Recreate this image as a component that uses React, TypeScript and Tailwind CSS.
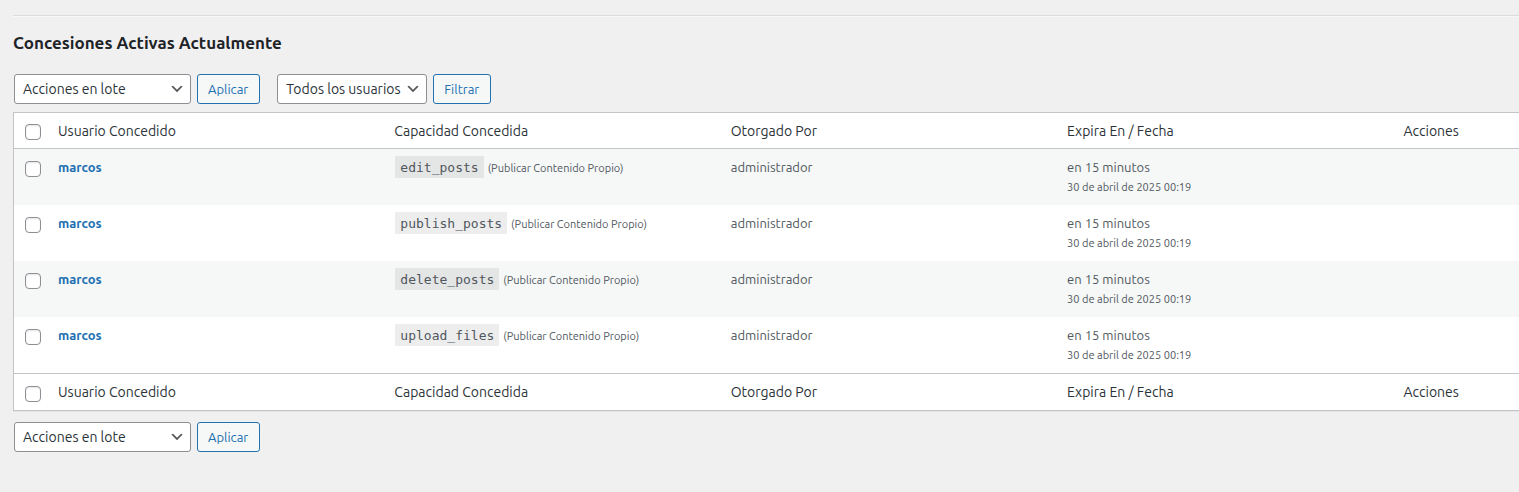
import { ReactNode, useState } from "react";

const columns = [
  "Usuario Concedido",
  "Capacidad Concedida",
  "Otorgado Por",
  "Expira En / Fecha",
  "Acciones",
];

const grants = [
  { id: 1, user: "marcos", capability: "edit_posts" },
  { id: 2, user: "marcos", capability: "publish_posts" },
  { id: 3, user: "marcos", capability: "delete_posts" },
  { id: 4, user: "marcos", capability: "upload_files" },
].map((grant) => ({
  ...grant,
  description: "(Publicar Contenido Propio)",
  grantedBy: "administrador",
  expiresIn: "en 15 minutos",
  expiresAt: "30 de abril de 2025 00:19",
}));

function Dropdown({ label, options, width }: { label: string; options: string[]; width: string }) {
  return (
    <div className={`relative ${width}`}>
      <select
        aria-label={label}
        className="h-[30px] w-full appearance-none rounded-[3px] border border-[#8c8f94] bg-white pr-6 pl-2 text-[14px] leading-7 text-[#2c3338]"
      >
        {options.map((option) => (
          <option key={option}>{option}</option>
        ))}
      </select>
      <svg
        viewBox="0 0 20 20"
        className="pointer-events-none absolute top-[7px] right-[6px] size-4"
        fill="#555"
        aria-hidden="true"
      >
        <path d="M5 6l5 5 5-5 2 1-7 7-7-7 2-1z" />
      </svg>
    </div>
  );
}

function Button({ children }: { children: ReactNode }) {
  return (
    <button
      type="button"
      className="h-[30px] rounded-[3px] border border-[#2271b1] bg-[#f6f7f7] pr-[11px] pl-[10px] text-[13px] leading-7 text-[#2271b1]"
    >
      {children}
    </button>
  );
}

function Tick({ label, checked, onChange }: { label: string; checked: boolean; onChange: () => void }) {
  return (
    <input
      type="checkbox"
      aria-label={label}
      checked={checked}
      onChange={onChange}
      className="block size-4 appearance-none rounded-[4px] border border-[#8c8f94] bg-white shadow-[inset_0_1px_2px_rgba(0,0,0,0.1)] checked:bg-[#2271b1]"
    />
  );
}

function BulkActions() {
  return (
    <div className="flex gap-[6px]">
      <Dropdown label="Acciones en lote" options={["Acciones en lote", "Revocar"]} width="w-[177px]" />
      <Button>Aplicar</Button>
    </div>
  );
}

export default function App() {
  const [selected, setSelected] = useState<number[]>([]);
  const allSelected = selected.length === grants.length;
  const toggleAll = () => setSelected(allSelected ? [] : grants.map((grant) => grant.id));
  const toggle = (id: number) =>
    setSelected((ids) => (ids.includes(id) ? ids.filter((other) => other !== id) : [...ids, id]));

  return (
    <main className="min-h-screen overflow-hidden bg-[#f0f0f1] pt-[15px] pl-[13px] font-['Ubuntu','Noto_Sans',sans-serif] text-[13px] leading-5 text-[#50575e]">
      <hr className="h-[2px] border-t border-b border-t-[#dcdcde] border-b-[#f6f7f7]" />
      <h2 className="mt-4 text-[17px] leading-5 font-bold text-[#1d2327]">
        Concesiones Activas Actualmente
      </h2>

      <div className="mt-[21px] ml-px flex gap-[17px]">
        <BulkActions />
        <div className="flex gap-[6px]">
          <Dropdown
            label="Filtrar por usuario"
            options={["Todos los usuarios", "marcos"]}
            width="w-[150px]"
          />
          <Button>Filtrar</Button>
        </div>
      </div>

      <div className="mt-2 border-y border-l border-[#c3c4c7] bg-white shadow-[0_1px_1px_rgba(0,0,0,0.04)]">
        <table className="w-full table-fixed border-separate border-spacing-0 text-left">
          <colgroup>
            <col className="w-[34px]" />
            <col className="w-[22.35%]" />
            <col className="w-[22.35%]" />
            <col className="w-[22.35%]" />
            <col className="w-[22.35%]" />
            <col />
          </colgroup>
          <thead>
            <tr className="h-9 text-[14px] text-[#2c3338]">
              <td className="border-b border-[#c3c4c7] pt-[11px] pl-[11px] align-top">
                <Tick label="Seleccionar todos" checked={allSelected} onChange={toggleAll} />
              </td>
              {columns.map((column) => (
                <th key={column} scope="col" className="border-b border-[#c3c4c7] px-[10px] font-normal">
                  {column}
                </th>
              ))}
            </tr>
          </thead>
          <tbody>
            {grants.map((grant) => (
              <tr key={grant.id} className="h-14 align-top odd:bg-[#f6f7f7]">
                <td className="pt-3 pl-[11px]">
                  <Tick
                    label={`Seleccionar ${grant.capability}`}
                    checked={selected.includes(grant.id)}
                    onChange={() => toggle(grant.id)}
                  />
                </td>
                <td className="px-[10px] py-2">
                  <a href="#usuario" className="font-bold text-[#2271b1]">
                    {grant.user}
                  </a>
                </td>
                <td className="px-[10px] py-2">
                  <code className="mx-px bg-black/7 px-[5px] pt-1 pb-[3px] font-['DejaVu_Sans_Mono',monospace] text-[13px]">
                    {grant.capability}
                  </code>{" "}
                  <small className="text-[11px]">{grant.description}</small>
                </td>
                <td className="px-[10px] py-2">{grant.grantedBy}</td>
                <td className="px-[10px] py-2">
                  {grant.expiresIn}
                  <small className="block text-[11px]">{grant.expiresAt}</small>
                </td>
                <td className="px-[10px] py-2" />
              </tr>
            ))}
          </tbody>
          <tfoot>
            <tr className="h-[37px] text-[14px] text-[#2c3338]">
              <td className="border-t border-[#c3c4c7] pt-3 pl-[11px] align-top">
                <Tick label="Seleccionar todos" checked={allSelected} onChange={toggleAll} />
              </td>
              {columns.map((column) => (
                <th key={column} scope="col" className="border-t border-[#c3c4c7] px-[10px] font-normal">
                  {column}
                </th>
              ))}
            </tr>
          </tfoot>
        </table>
      </div>

      <div className="mt-[11px] ml-px">
        <BulkActions />
      </div>
    </main>
  );
}
